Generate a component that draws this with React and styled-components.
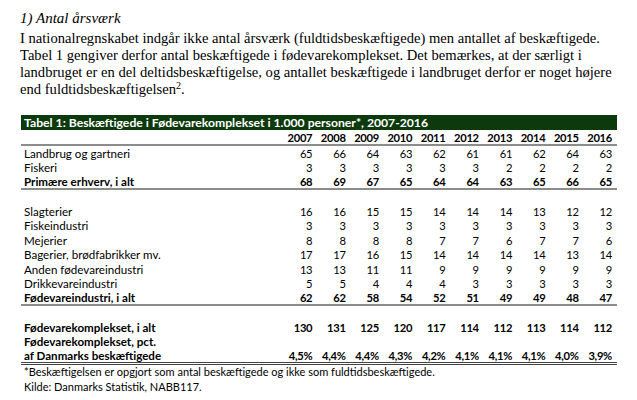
import React from "react"
import styled, { createGlobalStyle } from "styled-components"

const GlobalStyle = createGlobalStyle`
  body {
    margin: 0;
    background: #ffffff;
  }
`

const Page = styled.div`
  width: 637px;
  height: 400px;
  padding: 10px 0 0 20px;
  box-sizing: border-box;
  background: #fff;
  color: #000;
`

const Heading = styled.div`
  font-family: "Liberation Serif", serif;
  font-style: italic;
  font-size: 15px;
  line-height: 17px;
  margin-bottom: 3px;
`

const Body = styled.p`
  margin: 0;
  font-family: "Liberation Serif", serif;
  font-size: 14.6px;
  line-height: 17px;
  white-space: nowrap;
`

const Sup = styled.span`
  font-size: 10px;
  line-height: 10px;
  vertical-align: 5px;
`

const Table = styled.div`
  margin: 17px 0 0 1px;
  width: 596px;
  font-family: "Lato", "Liberation Sans", sans-serif;
  color: #000;
`

const TitleBar = styled.div`
  background: #0c3a0c;
  color: #fff;
  font-weight: 700;
  font-size: 12.2px;
  height: 15px;
  line-height: 15px;
  padding-left: 3px;
  white-space: nowrap;
`

const Row = styled.div`
  display: grid;
  grid-template-columns: 263px repeat(10, 1fr);
  align-items: center;
  box-sizing: border-box;
  height: ${({ $h }) => $h || 14.5}px;
  line-height: 13px;
  font-weight: ${({ $bold }) => ($bold ? 700 : 400)};
  border-bottom: ${({ $line }) =>
    $line === "double" ? "3px double #444" : $line ? "2px solid #8c8c8c" : "none"};
`

const Label = styled.div`
  padding-left: 3px;
  font-size: 11.6px;
  white-space: nowrap;
`

const Num = styled.div`
  text-align: right;
  padding-right: 5px;
  font-size: 11.2px;
  letter-spacing: -0.3px;
  white-space: nowrap;
`

const Note = styled.div`
  font-family: "Lato", "Liberation Sans", sans-serif;
  font-size: 11px;
  line-height: 14.5px;
  padding-left: 4px;
`

const years = [2007, 2008, 2009, 2010, 2011, 2012, 2013, 2014, 2015, 2016]

const rows = [
  { label: "Landbrug og gartneri", values: [65, 66, 64, 63, 62, 61, 61, 62, 64, 63] },
  { label: "Fiskeri", values: [3, 3, 3, 3, 3, 3, 2, 2, 2, 2] },
  { label: "Primære erhverv, i alt", values: [68, 69, 67, 65, 64, 64, 63, 65, 66, 65], bold: true, line: true },
  { label: "", values: [] },
  { label: "Slagterier", values: [16, 16, 15, 15, 14, 14, 14, 13, 12, 12] },
  { label: "Fiskeindustri", values: [3, 3, 3, 3, 3, 3, 3, 3, 3, 3] },
  { label: "Mejerier", values: [8, 8, 8, 8, 7, 7, 6, 7, 7, 6] },
  { label: "Bagerier, brødfabrikker mv.", values: [17, 17, 16, 15, 14, 14, 14, 14, 13, 14] },
  { label: "Anden fødevareindustri", values: [13, 13, 11, 11, 9, 9, 9, 9, 9, 9] },
  { label: "Drikkevareindustri", values: [5, 5, 4, 4, 4, 3, 3, 3, 3, 3] },
  { label: "Fødevareindustri, i alt", values: [62, 62, 58, 54, 52, 51, 49, 49, 48, 47], bold: true, line: true },
  { label: "", values: [] },
  { label: "Fødevarekomplekset, i alt", values: [130, 131, 125, 120, 117, 114, 112, 113, 114, 112], bold: true },
  { label: "Fødevarekomplekset, pct.", values: [], bold: true },
  {
    label: "af Danmarks beskæftigede",
    values: ["4,5%", "4,4%", "4,4%", "4,3%", "4,2%", "4,1%", "4,1%", "4,1%", "4,0%", "3,9%"],
    bold: true,
    line: "double",
    h: 16,
  },
]

export default function App() {
  return (
    <Page>
      <GlobalStyle />
      <Heading>1) Antal årsværk</Heading>
      <Body>
        I nationalregnskabet indgår ikke antal årsværk (fuldtidsbeskæftigede) men antallet af beskæftigede.
        <br />
        Tabel 1 gengiver derfor antal beskæftigede i fødevarekomplekset. Det bemærkes, at der særligt i
        <br />
        landbruget er en del deltidsbeskæftigelse, og antallet beskæftigede i landbruget derfor er noget højere
        <br />
        end fuldtidsbeskæftigelsen<Sup>2</Sup>.
      </Body>
      <Table>
        <TitleBar>Tabel 1: Beskæftigede i Fødevarekomplekset i 1.000 personer*, 2007-2016</TitleBar>
        <Row $bold $line $h={16}>
          <Label />
          {years.map((y) => (
            <Num key={y}>{y}</Num>
          ))}
        </Row>
        {rows.map((r, i) => (
          <Row key={i} $bold={r.bold} $line={r.line} $h={r.h}>
            <Label>{r.label}</Label>
            {years.map((y, j) => (
              <Num key={y}>{r.values[j] ?? ""}</Num>
            ))}
          </Row>
        ))}
      </Table>
      <Note>
        *Beskæftigelsen er opgjort som antal beskæftigede og ikke som fuldtidsbeskæftigede.
        <br />
        Kilde: Danmarks Statistik, NABB117.
      </Note>
    </Page>
  )
}
